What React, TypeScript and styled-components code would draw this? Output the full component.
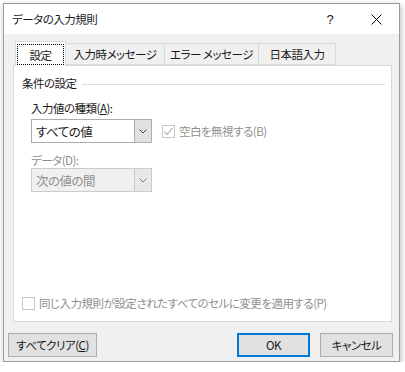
import * as React from 'react';
import styled, { createGlobalStyle } from 'styled-components';

const GlobalStyle = createGlobalStyle`
  html, body {
    margin: 0;
    background: #ffffff;
  }
  body {
    font-family: "Noto Sans CJK JP", "Noto Sans", sans-serif;
    font-size: 11.5px;
    letter-spacing: -0.5px;
    font-feature-settings: "palt";
    color: #1a1a1a;
  }
`;

const Window = styled.div`
  margin: 3px 0 0 3px;
  width: 397px;
  height: 359px;
  box-sizing: border-box;
  border: 1px solid #9c9c9c;
  background: #f0f0f0;
  box-shadow: 1px 2px 6px rgba(0, 0, 0, 0.28);
  display: flex;
  flex-direction: column;
`;

const TitleBar = styled.div`
  height: 30px;
  background: #ffffff;
  display: flex;
  align-items: center;
`;

const Title = styled.div`
  flex: 1;
  padding-left: 8px;
  line-height: 16px;
`;

const CaptionButton = styled.div`
  width: 46px;
  height: 30px;
  display: flex;
  align-items: center;
  justify-content: center;
  font-family: "Liberation Sans", sans-serif;
  font-size: 13px;
  letter-spacing: 0;
`;

const Body = styled.div`
  flex: 1;
  display: flex;
  flex-direction: column;
  padding: 7px 6px 4px 4px;
`;

const TabRow = styled.div`
  display: flex;
  align-items: flex-end;
  height: 24px;
  margin-left: 7px;
  position: relative;
  z-index: 1;
`;

const Tab = styled.div<{ $active?: boolean; $w: number }>`
  width: ${(p) => p.$w}px;
  height: ${(p) => (p.$active ? 25 : 22)}px;
  box-sizing: border-box;
  border: 1px solid #d9d9d9;
  border-bottom: ${(p) => (p.$active ? 'none' : '1px solid #d9d9d9')};
  margin-left: ${(p) => (p.$active ? 0 : -1)}px;
  margin-bottom: ${(p) => (p.$active ? -1 : 0)}px;
  background: ${(p) => (p.$active ? '#ffffff' : '#f0f0f0')};
  display: flex;
  align-items: center;
  justify-content: center;
  line-height: 16px;
  white-space: nowrap;
  padding: ${(p) => (p.$active ? '2px 2px 0' : '0')};
`;

const FocusLabel = styled.span`
  flex: 1;
  align-self: stretch;
  margin: 1px 0 2px;
  outline: 1px dotted #000;
  display: flex;
  align-items: center;
  justify-content: center;
`;

const Panel = styled.div`
  height: 257px;
  box-sizing: border-box;
  margin: 0 1px 0 5px;
  border: 1px solid #d9d9d9;
  background: #ffffff;
  display: flex;
  flex-direction: column;
`;

const GroupHeader = styled.div`
  display: flex;
  align-items: center;
  margin: 9px 6px 0 8px;
  line-height: 16px;
`;

const GroupLine = styled.div`
  flex: 1;
  height: 1px;
  margin: 3px 0 0 5px;
  background: #dcdcdc;
`;

const Field = styled.div`
  padding-left: 17px;
  display: flex;
  flex-direction: column;
`;

const FieldLabel = styled.div<{ $disabled?: boolean; $top: number }>`
  margin-top: ${(p) => p.$top}px;
  line-height: 16px;
  color: ${(p) => (p.$disabled ? '#8f8f8f' : 'inherit')};
`;

const ComboRow = styled.div<{ $top: number }>`
  margin-top: ${(p) => p.$top}px;
  display: flex;
  align-items: center;
`;

const Combo = styled.div<{ $disabled?: boolean }>`
  width: 121px;
  height: 24px;
  box-sizing: border-box;
  border: 1px solid ${(p) => (p.$disabled ? '#cccccc' : '#adadad')};
  background: ${(p) => (p.$disabled ? '#f0f0f0' : '#ffffff')};
  display: flex;
  color: ${(p) => (p.$disabled ? '#8f8f8f' : 'inherit')};
`;

const ComboText = styled.div`
  flex: 1;
  padding-left: 4px;
  display: flex;
  align-items: center;
  font-size: 12.5px;
`;

const ComboButton = styled.div<{ $disabled?: boolean }>`
  width: 16px;
  border-left: 1px solid ${(p) => (p.$disabled ? '#cccccc' : '#adadad')};
  background: ${(p) => (p.$disabled ? '#e8e8e8' : '#e1e1e1')};
  display: flex;
  align-items: center;
  justify-content: center;
`;

const CheckRow = styled.div<{ $disabled?: boolean }>`
  display: flex;
  align-items: center;
  gap: 4px;
  line-height: 16px;
  white-space: nowrap;
  color: ${(p) => (p.$disabled ? '#8f8f8f' : 'inherit')};
`;

const Box = styled.div`
  width: 13px;
  height: 13px;
  box-sizing: border-box;
  border: 1px solid #c6c6c6;
  background: #ffffff;
  display: flex;
  align-items: center;
  justify-content: center;
`;

const BlankCheck = styled(CheckRow)`
  margin: auto 0 10px 8px;
`;

const SideCheck = styled(CheckRow)`
  margin-left: 10px;
`;

const Footer = styled.div`
  margin-top: 11px;
  display: flex;
  align-items: center;
`;

const Spacer = styled.div`
  flex: 1;
`;

const Button = styled.div<{ $default?: boolean; $w: number }>`
  width: ${(p) => p.$w}px;
  height: 24px;
  box-sizing: border-box;
  border: ${(p) => (p.$default ? '2px solid #0078d7' : '1px solid #adadad')};
  background: #e1e1e1;
  display: flex;
  align-items: center;
  justify-content: center;
  margin-left: 10px;
  &:first-child {
    margin-left: 0;
  }
`;

const Chevron = ({ color }: { color: string }) => (
  <svg width="8" height="5" viewBox="0 0 8 5">
    <polyline points="0.5,0.5 4,4 7.5,0.5" fill="none" stroke={color} strokeWidth="1" />
  </svg>
);

const CheckMark = () => (
  <svg width="11" height="11" viewBox="0 0 11 11">
    <polyline points="1.5,5.5 4,8.5 9.5,2" fill="none" stroke="#a2a2a2" strokeWidth="1.1" />
  </svg>
);

const CloseIcon = () => (
  <svg width="11" height="11" viewBox="0 0 11 11">
    <line x1="0.5" y1="0.5" x2="10.5" y2="10.5" stroke="#000" strokeWidth="1" />
    <line x1="10.5" y1="0.5" x2="0.5" y2="10.5" stroke="#000" strokeWidth="1" />
  </svg>
);

const App: React.FC = () => {
  return (
    <>
      <GlobalStyle />
      <Window>
        <TitleBar>
          <Title>データの入力規則</Title>
          <CaptionButton>?</CaptionButton>
          <CaptionButton>
            <CloseIcon />
          </CaptionButton>
        </TitleBar>
        <Body>
          <TabRow>
            <Tab $active $w={51}>
              <FocusLabel>設定</FocusLabel>
            </Tab>
            <Tab $w={100}>入力時メッセージ</Tab>
            <Tab $w={95}>エラー メッセージ</Tab>
            <Tab $w={78}>日本語入力</Tab>
          </TabRow>
          <Panel>
            <GroupHeader>
              条件の設定
              <GroupLine />
            </GroupHeader>
            <Field>
              <FieldLabel $top={9}>
                入力値の種類(<u>A</u>):
              </FieldLabel>
              <ComboRow $top={3}>
                <Combo>
                  <ComboText>すべての値</ComboText>
                  <ComboButton>
                    <Chevron color="#404040" />
                  </ComboButton>
                </Combo>
                <SideCheck $disabled>
                  <Box>
                    <CheckMark />
                  </Box>
                  空白を無視する(B)
                </SideCheck>
              </ComboRow>
              <FieldLabel $disabled $top={9}>
                データ(D):
              </FieldLabel>
              <ComboRow $top={0}>
                <Combo $disabled>
                  <ComboText>次の値の間</ComboText>
                  <ComboButton $disabled>
                    <Chevron color="#7a7a7a" />
                  </ComboButton>
                </Combo>
              </ComboRow>
            </Field>
            <BlankCheck $disabled>
              <Box />
              同じ入力規則が設定されたすべてのセルに変更を適用する(P)
            </BlankCheck>
          </Panel>
          <Footer>
            <Button $w={89}>
              すべてクリア(<u>C</u>)
            </Button>
            <Spacer />
            <Button $default $w={73}>
              OK
            </Button>
            <Button $w={73}>キャンセル</Button>
          </Footer>
        </Body>
      </Window>
    </>
  );
};

export default App;
